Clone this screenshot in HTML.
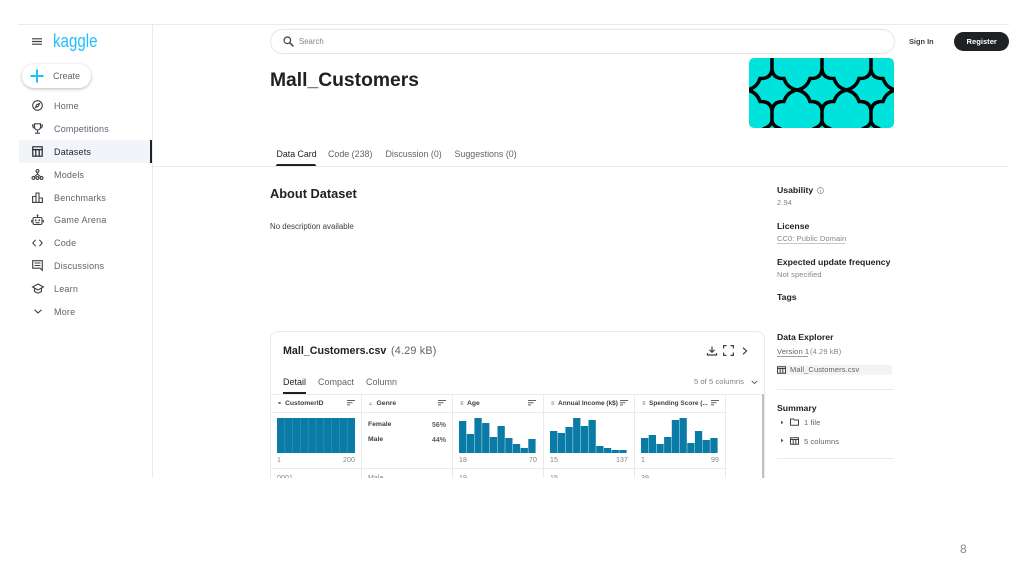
<!DOCTYPE html>
<html><head><meta charset="utf-8"><style>
html,body{margin:0;padding:0;background:#fff}
body{width:1024px;height:574px;position:relative;overflow:hidden;font-family:"Liberation Sans",sans-serif;color:#202124}
#w{position:absolute;left:0;top:0;width:1024px;height:478px;overflow:hidden;filter:blur(.3px)}
.t{position:absolute;white-space:nowrap;line-height:1}
.l{position:absolute;background:#e8eaed}
.n{font-size:9px;color:#5f6368;left:54px;letter-spacing:.2px}
.h{font-size:8.700px;font-weight:bold;color:#202124;left:777px}
.g{font-size:7.500px;color:#80868b;letter-spacing:.1px}
.th{font-size:6.800px;font-weight:bold;color:#3c4043;top:400.500px}
.ic{font-size:6px;color:#5f6368;top:400.500px}
svg{position:absolute;overflow:visible}
.i{fill:none;stroke:#3c4043;stroke-width:1.1}
</style></head><body>
<div id="w">
<div class="l" style="left:18px;top:24px;width:991px;height:1px"></div>
<div class="l" style="left:152px;top:25px;width:1px;height:453px"></div>
<div class="l" style="left:152px;top:166px;width:857px;height:1px"></div>

<svg style="left:32px;top:38px" width="10" height="8"><path d="M0 .8H10M0 3.5H10M0 6.2H10" stroke="#3c4043" stroke-width="1.2"/></svg>
<div class="t" style="left:53px;top:32px;font-size:18px;color:#20beff;transform:scaleX(.84);transform-origin:0 0">kaggle</div>

<div style="position:absolute;left:22px;top:64px;width:69px;height:24px;border-radius:13px;background:#fff;box-shadow:0 1px 3px rgba(0,0,0,.28)"></div>
<svg style="left:30px;top:69px" width="14" height="14"><path d="M7 .5V13.5M.5 7H13.5" stroke="#20beff" stroke-width="2"/></svg>
<div class="t" style="left:53px;top:72px;font-size:9px;color:#5f6368">Create</div>

<div style="position:absolute;left:19px;top:140px;width:131px;height:23px;background:#f1f5f9"></div>
<div style="position:absolute;left:150px;top:140px;width:2px;height:23px;background:#202124"></div>

<div class="t n" style="top:102px">Home</div>
<div class="t n" style="top:125px">Competitions</div>
<div class="t n" style="top:148px;color:#202124">Datasets</div>
<div class="t n" style="top:171px">Models</div>
<div class="t n" style="top:194px">Benchmarks</div>
<div class="t n" style="top:216px">Game Arena</div>
<div class="t n" style="top:239px">Code</div>
<div class="t n" style="top:262px">Discussions</div>
<div class="t n" style="top:285px">Learn</div>
<div class="t n" style="top:308px">More</div>

<svg style="left:32px;top:100px" width="11" height="11"><circle class="i" cx="5.5" cy="5.5" r="4.8"/><path d="M7.5 3.5L6.3 6.3 3.5 7.5 4.700 4.700Z" class="i" stroke-width=".9"/></svg>
<svg style="left:32px;top:123px" width="11" height="11"><path class="i" d="M2.500 .8H8.500V4A3 3 0 0 1 2.500 4ZM2.500 2H.6C.6 4 1.400 5 2.800 5.200M8.500 2H10.400C10.400 4 9.600 5 8.200 5.200M5.500 7V9.500M3 10.200H8"/></svg>
<svg style="left:32px;top:146px" width="11" height="11"><path d="M.8.8H10.200V10.200H.8ZM.8 3.600H10.200M3.800 3.600V10.200M7.200 3.600V10.200" fill="none" stroke="#202124" stroke-width="1.200"/></svg>
<svg style="left:31px;top:169px" width="13" height="11"><path class="i" d="M6.500 3V5L3 8M6.500 5L10 8"/><circle class="i" cx="6.500" cy="2" r="1.400"/><circle class="i" cx="2.400" cy="9" r="1.400"/><circle class="i" cx="6.500" cy="9" r="1.400"/><circle class="i" cx="10.600" cy="9" r="1.400"/></svg>
<svg style="left:32px;top:192px" width="11" height="11"><path class="i" d="M.6 4.500H4V10.400H.6ZM4 1H7V10.400H4ZM7 6H10.400V10.400H7Z"/></svg>
<svg style="left:31px;top:214px" width="13" height="12"><path class="i" d="M3.500 3.500H9.500Q11 3.500 11 5V9Q11 10.500 9.500 10.500H3.500Q2 10.500 2 9V5Q2 3.500 3.500 3.500ZM6.500 3.500V1.500M.7 6V8.500M12.300 6V8.500M4.500 8.700H8.500"/><circle cx="4.800" cy="6.300" r=".9" fill="#3c4043"/><circle cx="8.200" cy="6.300" r=".9" fill="#3c4043"/><circle cx="6.500" cy="1.300" r=".9" fill="#3c4043"/></svg>
<svg style="left:32px;top:239px" width="11" height="8"><path class="i" d="M3.600.8L.8 4 3.600 7.200M7.400.8L10.200 4 7.400 7.200"/></svg>
<svg style="left:32px;top:260px" width="11" height="11"><path class="i" d="M.7.7H10.300V10.300L8.200 8.200H.7ZM2.500 3H8.500M2.500 5.500H8.500"/></svg>
<svg style="left:32px;top:283px" width="12" height="11"><path class="i" d="M.6 4L6 1 11.400 4 6 7ZM2.500 5.500V8.500L6 10.200 9.500 8.500V5.500"/></svg>
<svg style="left:34px;top:309px" width="8" height="5"><path class="i" d="M.6.8L4 4 7.400.8"/></svg>

<div style="position:absolute;left:270px;top:29px;width:623px;height:23px;border:1px solid #e3e5e8;border-radius:13px;background:#fff"></div>
<svg style="left:283px;top:36px" width="11" height="11"><circle cx="4.300" cy="4.300" r="3.300" fill="none" stroke="#3c4043" stroke-width="1.200"/><path d="M6.800 6.800L10.400 10.400" stroke="#3c4043" stroke-width="1.500"/></svg>
<div class="t" style="left:299px;top:38px;font-size:7.800px;color:#80868b">Search</div>
<div class="t" style="left:909px;top:37.500px;font-size:7.400px;font-weight:bold;color:#3c4043">Sign In</div>
<div style="position:absolute;left:954px;top:32px;width:55px;height:19px;border-radius:10px;background:#202124"></div>
<div class="t" style="left:966.500px;top:37.500px;font-size:7.600px;font-weight:bold;color:#fff">Register</div>

<div class="t" style="left:270px;top:71px;font-size:19.300px;font-weight:bold;color:#202124">Mall_Customers</div>

<svg style="left:749px;top:58px" width="145" height="70" viewBox="749 58 145 70">
<defs><clipPath id="c"><rect x="749" y="58" width="145" height="70" rx="5"/></clipPath>
<g id="u"><path d="M0-35V-21Q1-11 12-11.500Q15-2 25 0M0-21Q-1-11-12-11.500Q-15-2-25 0M0 35V21Q1 11 12 11.500Q15 2 25 0M0 21Q-1 11-12 11.500Q-15 2-25 0M0 30Q0 36-9 39M0 30Q0 36 9 39" fill="none" stroke="#000" stroke-width="3.500"/></g></defs>
<g clip-path="url(#c)"><rect x="749" y="58" width="145" height="70" fill="#00e2dc"/>
<use href="#u" transform="translate(772 90)"/><use href="#u" transform="translate(822 90)"/><use href="#u" transform="translate(871 90)"/></g></svg>

<div class="t" style="left:276.500px;top:149.500px;font-size:8.800px;color:#202124">Data Card</div>
<div style="position:absolute;left:276px;top:163.500px;width:40px;height:2.500px;background:#202124;border-radius:2px 2px 0 0"></div>
<div class="t" style="left:328px;top:149.500px;font-size:8.900px;color:#5f6368">Code (238)</div>
<div class="t" style="left:385.500px;top:149.500px;font-size:8.900px;color:#5f6368">Discussion (0)</div>
<div class="t" style="left:454.500px;top:149.500px;font-size:8.900px;color:#5f6368">Suggestions (0)</div>

<div class="t" style="left:270px;top:187.500px;font-size:12.800px;font-weight:bold;color:#202124">About Dataset</div>
<div class="t" style="left:270px;top:222.500px;font-size:7.900px;color:#3c4043">No description available</div>

<div class="t h" style="top:186px">Usability</div>
<svg style="left:817px;top:186.500px" width="7" height="7"><circle cx="3.500" cy="3.500" r="3" fill="none" stroke="#80868b" stroke-width=".7"/><path d="M3.500 3V5.500M3.500 1.700V2.400" stroke="#80868b" stroke-width=".7"/></svg>
<div class="t g" style="left:777px;top:199px">2.94</div>
<div class="t h" style="top:222px">License</div>
<div class="t g" style="left:777px;top:234.500px">CC0: Public Domain</div>
<div class="l" style="left:777px;top:243px;width:68px;height:1px;background:#c4c7ca"></div>
<div class="t h" style="top:258px">Expected update frequency</div>
<div class="t g" style="left:777px;top:270.500px">Not specified</div>
<div class="t h" style="top:293px">Tags</div>
<div class="t h" style="top:333px">Data Explorer</div>
<div class="t g" style="left:777px;top:347.500px;color:#5f6368">Version 1</div>
<div class="t g" style="left:810px;top:347.500px">(4.29 kB)</div>
<div class="l" style="left:777px;top:355.500px;width:31px;height:1px;background:#9aa0a6"></div>
<div style="position:absolute;left:777px;top:365px;width:115px;height:10px;background:#f1f3f4"></div>
<svg style="left:777px;top:366px" width="9" height="8"><path d="M.5.8H8.500V7.200H.5ZM.5 2.500H8.500M3.200 2.500V7.200M5.800 2.500V7.200" fill="none" stroke="#3c4043"/></svg>
<div class="t g" style="left:790px;top:366px;color:#5f6368">Mall_Customers.csv</div>
<div class="l" style="left:777px;top:389px;width:117px;height:1px"></div>
<div class="t h" style="top:404px">Summary</div>
<svg style="left:780px;top:420px" width="4" height="5"><path d="M1 .5L3.500 2.500 1 4.500Z" fill="#5f6368"/></svg>
<svg style="left:790px;top:418px" width="9" height="8"><path d="M.5 1H3.500L4.500 2H8.500V7.200H.5Z" fill="none" stroke="#3c4043"/></svg>
<div class="t g" style="left:804px;top:418.500px;color:#5f6368">1 file</div>
<svg style="left:780px;top:438px" width="4" height="5"><path d="M1 .5L3.500 2.500 1 4.500Z" fill="#5f6368"/></svg>
<svg style="left:790px;top:437px" width="9" height="8"><path d="M.5.8H8.500V7.200H.5ZM.5 2.500H8.500M3.200 2.500V7.200M5.800 2.500V7.200" fill="none" stroke="#3c4043"/></svg>
<div class="t g" style="left:804px;top:437.500px;color:#5f6368">5 columns</div>
<div class="l" style="left:777px;top:458px;width:117px;height:1px"></div>

<div style="position:absolute;left:270px;top:331px;width:493px;height:170px;border:1px solid #e8eaed;border-radius:8px"></div>
<div class="t" style="left:283px;top:345.500px;font-size:10.700px;font-weight:bold;color:#202124">Mall_Customers.csv</div>
<div class="t" style="left:391px;top:345.500px;font-size:10.800px;color:#5f6368;letter-spacing:.2px">(4.29 kB)</div>
<svg style="left:707px;top:346px" width="10" height="10"><path d="M5 .5V6M2.500 3.800L5 6.300 7.500 3.800M.5 7V9H9.500V7" fill="none" stroke="#3c4043" stroke-width="1.200"/></svg>
<svg style="left:723px;top:345px" width="11" height="11"><path d="M.6 3.500V.6H3.500M7.500.6H10.400V3.500M.6 7.500V10.400H3.500M7.500 10.400H10.400V7.500" fill="none" stroke="#3c4043" stroke-width="1.200"/></svg>
<svg style="left:742px;top:347px" width="6" height="8"><path d="M1 .7L4.500 4 1 7.300" fill="none" stroke="#3c4043" stroke-width="1.200"/></svg>

<div class="t" style="left:283px;top:377.500px;font-size:9px;color:#202124">Detail</div>
<div style="position:absolute;left:283px;top:391.500px;width:23px;height:2.500px;background:#202124"></div>
<div class="t" style="left:318px;top:377.500px;font-size:9px;color:#5f6368">Compact</div>
<div class="t" style="left:366px;top:377.500px;font-size:9px;color:#5f6368">Column</div>
<div class="t" style="left:694px;top:378px;font-size:7.700px;color:#80868b">5 of 5 columns</div>
<svg style="left:751px;top:380px" width="7" height="5"><path d="M.7.8L3.500 3.500 6.300.8" fill="none" stroke="#5f6368"/></svg>

<div class="l" style="left:271px;top:394px;width:491px;height:1px"></div>
<div class="l" style="left:271px;top:412px;width:455px;height:1px"></div>
<div class="l" style="left:271px;top:468px;width:455px;height:1px"></div>
<div class="l" style="left:361px;top:394px;width:1px;height:84px"></div>
<div class="l" style="left:452px;top:394px;width:1px;height:84px"></div>
<div class="l" style="left:543px;top:394px;width:1px;height:84px"></div>
<div class="l" style="left:634px;top:394px;width:1px;height:84px"></div>
<div class="l" style="left:725px;top:394px;width:1px;height:84px"></div>
<div style="position:absolute;left:762px;top:394px;width:2px;height:84px;background:#bdc1c6"></div>

<div class="t ic" style="left:277px">⚭</div><div class="t th" style="left:285px">CustomerID</div>
<div class="t ic" style="left:369px">▵</div><div class="t th" style="left:376.500px">Genre</div>
<div class="t ic" style="left:460px">≡</div><div class="t th" style="left:467px">Age</div>
<div class="t ic" style="left:551px">≡</div><div class="t th" style="left:558px;font-size:6.500px">Annual Income (k$)</div>
<div class="t ic" style="left:642px">≡</div><div class="t th" style="left:649px;font-size:6.500px">Spending Score (...</div>
<svg style="left:346.500px;top:400px" width="8" height="6"><path d="M0 .5H8M0 2.700H5.500M0 4.900H3" stroke="#5f6368" fill="none"/></svg>
<svg style="left:437.500px;top:400px" width="8" height="6"><path d="M0 .5H8M0 2.700H5.500M0 4.900H3" stroke="#5f6368" fill="none"/></svg>
<svg style="left:528px;top:400px" width="8" height="6"><path d="M0 .5H8M0 2.700H5.500M0 4.900H3" stroke="#5f6368" fill="none"/></svg>
<svg style="left:620px;top:400px" width="8" height="6"><path d="M0 .5H8M0 2.700H5.500M0 4.900H3" stroke="#5f6368" fill="none"/></svg>
<svg style="left:711px;top:400px" width="8" height="6"><path d="M0 .5H8M0 2.700H5.500M0 4.900H3" stroke="#5f6368" fill="none"/></svg>

<svg style="left:277px;top:417px" width="78" height="36">
<rect x="0" y="1" width="78" height="35" fill="#0a7ba6"/>
<path d="M7.800 1V36M15.600 1V36M23.400 1V36M31.200 1V36M39 1V36M46.800 1V36M54.600 1V36M62.400 1V36M70.200 1V36" stroke="#3f97b9" stroke-width=".6"/></svg>
<svg style="left:459px;top:417px" width="78" height="36"><g fill="#0a7ba6">
<rect x="0" y="4" width="7.300" height="32"/><rect x="7.700" y="17" width="7.300" height="19"/><rect x="15.400" y="1" width="7.300" height="35"/><rect x="23.100" y="6" width="7.300" height="30"/><rect x="30.800" y="20" width="7.300" height="16"/><rect x="38.500" y="9" width="7.300" height="27"/><rect x="46.200" y="21" width="7.300" height="15"/><rect x="53.900" y="27" width="7.300" height="9"/><rect x="61.600" y="31" width="7.300" height="5"/><rect x="69.300" y="22" width="7.300" height="14"/></g></svg>
<svg style="left:550px;top:417px" width="78" height="36"><g fill="#0a7ba6">
<rect x="0" y="14" width="7.300" height="22"/><rect x="7.700" y="16" width="7.300" height="20"/><rect x="15.400" y="10" width="7.300" height="26"/><rect x="23.100" y="1" width="7.300" height="35"/><rect x="30.800" y="9" width="7.300" height="27"/><rect x="38.500" y="3" width="7.300" height="33"/><rect x="46.200" y="29" width="7.300" height="7"/><rect x="53.900" y="31" width="7.300" height="5"/><rect x="61.600" y="33" width="7.300" height="3"/><rect x="69.300" y="33" width="7.300" height="3"/></g></svg>
<svg style="left:641px;top:417px" width="78" height="36"><g fill="#0a7ba6">
<rect x="0" y="21" width="7.300" height="15"/><rect x="7.700" y="18" width="7.300" height="18"/><rect x="15.400" y="27" width="7.300" height="9"/><rect x="23.100" y="20" width="7.300" height="16"/><rect x="30.800" y="3" width="7.300" height="33"/><rect x="38.500" y="1" width="7.300" height="35"/><rect x="46.200" y="26" width="7.300" height="10"/><rect x="53.900" y="14" width="7.300" height="22"/><rect x="61.600" y="23" width="7.300" height="13"/><rect x="69.300" y="21" width="7.300" height="15"/></g></svg>

<div class="t" style="left:368px;top:421.500px;font-size:6.800px;font-weight:bold;color:#3c4043">Female</div>
<div class="t" style="left:432px;top:421.500px;font-size:7px;font-weight:bold;color:#5f6368">56%</div>
<div class="t" style="left:368px;top:437px;font-size:6.800px;font-weight:bold;color:#3c4043">Male</div>
<div class="t" style="left:432px;top:437px;font-size:7px;font-weight:bold;color:#5f6368">44%</div>

<div class="t g" style="left:277px;top:456.500px;font-size:7px">1</div>
<div class="t g" style="left:343px;top:456.500px;font-size:7px">200</div>
<div class="t g" style="left:459px;top:456.500px;font-size:7px">18</div>
<div class="t g" style="left:529px;top:456.500px;font-size:7px">70</div>
<div class="t g" style="left:550px;top:456.500px;font-size:7px">15</div>
<div class="t g" style="left:616px;top:456.500px;font-size:7px">137</div>
<div class="t g" style="left:641px;top:456.500px;font-size:7px">1</div>
<div class="t g" style="left:711px;top:456.500px;font-size:7px">99</div>

<div class="t g" style="left:277px;top:475px;font-size:7px">0001</div>
<div class="t g" style="left:368px;top:475px;font-size:7px">Male</div>
<div class="t g" style="left:459px;top:475px;font-size:7px">19</div>
<div class="t g" style="left:550px;top:475px;font-size:7px">15</div>
<div class="t g" style="left:641px;top:475px;font-size:7px">39</div>
</div>
<div class="t" style="left:960px;top:543px;font-size:12px;color:#8a8a8a">8</div>
</body></html>
